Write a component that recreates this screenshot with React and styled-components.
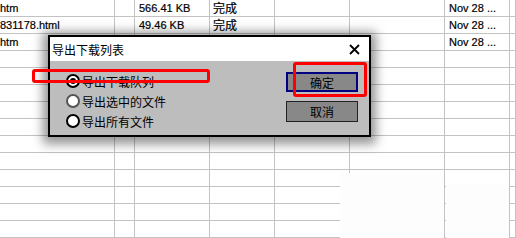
import styled, { createGlobalStyle } from 'styled-components';

const GlobalStyle = createGlobalStyle`
  html, body {
    margin: 0;
    padding: 0;
    background: #ffffff;
    overflow: hidden;
  }
`;

const rows = [
  ['htm', '', '566.41 KB', '完成', '', '', 'Nov 28 ...', ''],
  ['831178.html', '', '49.46 KB', '完成', '', '', 'Nov 28 ...', ''],
  ['htm', '', '', '', '', '', 'Nov 28 ...', ''],
];
const TOTAL_ROWS = 14;

const options = [
  { label: '导出下载队列', checked: true, tone: 'dark' },
  { label: '导出选中的文件', checked: false, tone: 'light' },
  { label: '导出所有文件', checked: false, tone: 'dark' },
];

const App = () => {
  const allRows = Array.from({ length: TOTAL_ROWS }, (_, i) => rows[i] || Array(8).fill(''));

  return (
    <Screen>
      <GlobalStyle />
      <Grid>
        {allRows.map((row, r) =>
          row.map((text, c) => (
            <Cell key={`${r}-${c}`} cjk={text === '完成'}>
              {text}
            </Cell>
          ))
        )}
      </Grid>

      <Patch left={340} top={173} width={104} height={65} />
      <Patch left={446} top={184} width={63} height={54} />

      <Dialog>
        <TitleBar>
          <Title>导出下载列表</Title>
          <CloseButton>
            <svg width="11" height="11" viewBox="0 0 11 11">
              <path d="M1 1 L10 10 M10 1 L1 10" stroke="#000" strokeWidth="1.8" />
            </svg>
          </CloseButton>
        </TitleBar>
        <Body>
          <RadioGroup>
            {options.map((o) => (
              <RadioRow key={o.label}>
                <Radio tone={o.tone}>{o.checked && <Dot />}</Radio>
                <RadioLabel>{o.label}</RadioLabel>
              </RadioRow>
            ))}
          </RadioGroup>
          <Buttons>
            <Button primary>确定</Button>
            <Button>取消</Button>
          </Buttons>
        </Body>
      </Dialog>

      <Marker left={32} top={69} width={178} height={14} />
      <Marker left={293} top={62} width={74} height={35} />
    </Screen>
  );
};

const Screen = styled.div`
  position: relative;
  width: 516px;
  height: 238px;
  overflow: hidden;
  background: #ffffff;
`;

const Grid = styled.div`
  display: grid;
  grid-template-columns: 115px 20px 75px 65px 75px 95px 65px 1fr;
  grid-auto-rows: 17px;
`;

const Cell = styled.div`
  box-sizing: border-box;
  border-right: 1px solid #c3c3c3;
  border-bottom: 1px solid #c3c3c3;
  padding-left: ${(p) => (p.cjk ? '3px' : '4px')};
  font-family: ${(p) => (p.cjk ? '"Noto Sans CJK SC", sans-serif' : '"Liberation Sans", Arial, sans-serif')};
  font-size: ${(p) => (p.cjk ? '12px' : '11px')};
  line-height: 16px;
  color: #000;
  -webkit-text-stroke: 0.2px #000;
  white-space: nowrap;
  overflow: hidden;
  &:nth-child(8n + 1) {
    padding-left: 0;
  }
`;

const Patch = styled.div`
  position: absolute;
  left: ${(p) => p.left}px;
  top: ${(p) => p.top}px;
  width: ${(p) => p.width}px;
  height: ${(p) => p.height}px;
  background: #fdfdfd;
`;

const Dialog = styled.div`
  position: absolute;
  left: 48px;
  top: 35px;
  width: 323px;
  height: 102px;
  box-sizing: border-box;
  border: 2px solid #000;
  display: flex;
  flex-direction: column;
  box-shadow: 0 2px 10px 5px rgba(0, 0, 0, 0.42);
`;

const TitleBar = styled.div`
  height: 24px;
  background: #ffffff;
  display: flex;
  align-items: center;
  justify-content: space-between;
  padding: 0 9px 0 2px;
`;

const Title = styled.span`
  font-family: "Noto Sans CJK SC", sans-serif;
  font-size: 12px;
  color: #000;
`;

const CloseButton = styled.span`
  display: flex;
  align-items: center;
`;

const Body = styled.div`
  flex: 1;
  background: #bdbdbd;
  display: flex;
  justify-content: space-between;
  padding: 10px 11px 0 16px;
`;

const RadioGroup = styled.div`
  display: flex;
  flex-direction: column;
`;

const RadioRow = styled.div`
  display: flex;
  align-items: center;
  gap: 2px;
  height: 20px;
`;

const Radio = styled.span`
  box-sizing: border-box;
  width: 14px;
  height: 14px;
  border-radius: 50%;
  background: #fff;
  border: 2px solid ${(p) => (p.tone === 'dark' ? '#000' : '#555')};
  display: flex;
  align-items: center;
  justify-content: center;
`;

const Dot = styled.span`
  width: 6px;
  height: 6px;
  border-radius: 50%;
  background: #000;
`;

const RadioLabel = styled.span`
  font-family: "Noto Sans CJK SC", sans-serif;
  font-size: 12px;
  color: #000;
`;

const Buttons = styled.div`
  display: flex;
  flex-direction: column;
  gap: 9px;
  padding-top: 1px;
`;

const Button = styled.div`
  box-sizing: border-box;
  width: 72px;
  height: ${(p) => (p.primary ? '20px' : '21px')};
  background: #888888;
  border: ${(p) => (p.primary ? '2px solid #000080' : '1px solid #222')};
  display: flex;
  align-items: center;
  justify-content: center;
  font-family: "Noto Sans CJK SC", sans-serif;
  font-size: 12px;
  color: #000;
`;

const Marker = styled.div`
  position: absolute;
  left: ${(p) => p.left}px;
  top: ${(p) => p.top}px;
  width: ${(p) => p.width}px;
  height: ${(p) => p.height}px;
  box-sizing: border-box;
  border: 3px solid #ff0000;
  border-radius: 3px;
`;

export default App;
